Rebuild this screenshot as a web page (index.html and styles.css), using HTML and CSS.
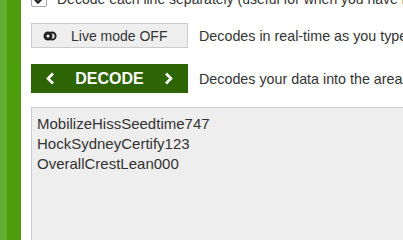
FILE: index.html
```html
<!DOCTYPE html>
<html lang="en">
<head>
    <meta charset="UTF-8">
    <meta name="viewport" content="width=device-width, initial-scale=1.0">
    <title>Decode</title>
    <link rel="stylesheet" href="styles.css">
</head>
<body>
    <div class="page">
        <div class="sidebar">
            <div class="sidebar-pattern"></div>
            <div class="sidebar-solid"></div>
        </div>
        <div class="main">
            <div class="row check-row">
                <span class="checkbox">
                    <svg width="11" height="9" viewBox="0 0 11 9"><path d="M1 4.5 L4 7.5 L10 1.5" fill="none" stroke="#222" stroke-width="2.4"/></svg>
                </span>
                <span class="label">Decode each line separately (useful for when you have multiple entries)</span>
            </div>

            <div class="row">
                <button class="btn btn-live">
                    <svg width="14" height="10" viewBox="0 0 14 10"><circle cx="9" cy="5" r="3.6" fill="none" stroke="#222" stroke-width="2"/><circle cx="5" cy="5" r="4.5" fill="#222"/><circle cx="5" cy="5" r="1.6" fill="#eee"/></svg>
                    Live mode OFF
                </button>
                <span class="hint">Decodes in real-time as you type or paste</span>
            </div>

            <div class="row row-decode">
                <button class="btn btn-decode">
                    <svg width="9" height="13" viewBox="0 0 9 13"><path d="M7 1.5 L2 6.5 L7 11.5" fill="none" stroke="white" stroke-width="2.6"/></svg>
                    DECODE
                    <svg width="9" height="13" viewBox="0 0 9 13"><path d="M2 1.5 L7 6.5 L2 11.5" fill="none" stroke="white" stroke-width="2.6"/></svg>
                </button>
                <span class="hint">Decodes your data into the area below.</span>
            </div>

            <div class="output">MobilizeHissSeedtime747
HockSydneyCertify123
OverallCrestLean000</div>
        </div>
    </div>
</body>
</html>
```

FILE: styles.css
```css
/* Basic styling */
body {
    margin: 0;
    background: white;
    font-family: "Liberation Sans", Arial, sans-serif;
    font-size: 14px;
    color: #333;
    overflow: hidden;
}

.page {
    display: flex;
    height: 240px;
}

.sidebar {
    display: flex;
    width: 21px;
    flex-shrink: 0;
}

.sidebar-pattern {
    width: 7px;
    background: #63ad30;
}

.sidebar-solid {
    width: 14px;
    background: #4c9e0c;
}

.main {
    margin-top: -9px;
    padding-left: 10px;
    width: 640px;
    flex-shrink: 0;
}

.row {
    display: flex;
    align-items: center;
    white-space: nowrap;
    margin-bottom: 16px;
}

.check-row {
    height: 16px;
    margin-bottom: 16px;
}

.checkbox {
    width: 14px;
    height: 14px;
    border: 1px solid #aaa;
    border-radius: 2px;
    background: white;
    display: flex;
    align-items: center;
    justify-content: center;
    margin-right: 10px;
}

.btn {
    display: flex;
    align-items: center;
    width: 157px;
    border-radius: 0;
    font-family: inherit;
    cursor: pointer;
}

.btn-live {
    height: 25px;
    background: #eee;
    border: 1px solid #ccc;
    color: #333;
    font-size: 14px;
    padding: 0 0 0 11px;
    gap: 14px;
}

.btn-decode {
    height: 29px;
    background: #2d6404;
    border: none;
    color: white;
    font-size: 16px;
    font-weight: bold;
    justify-content: center;
    gap: 20px;
}

.hint {
    margin-left: 11px;
    font-size: 14.3px;
}

.row-decode {
    margin-bottom: 14px;
}

.output {
    height: 160px;
    background: #eee;
    border: 1px solid #ccc;
    padding: 6px 5px;
    font-size: 15px;
    line-height: 20px;
    white-space: pre;
}
```
